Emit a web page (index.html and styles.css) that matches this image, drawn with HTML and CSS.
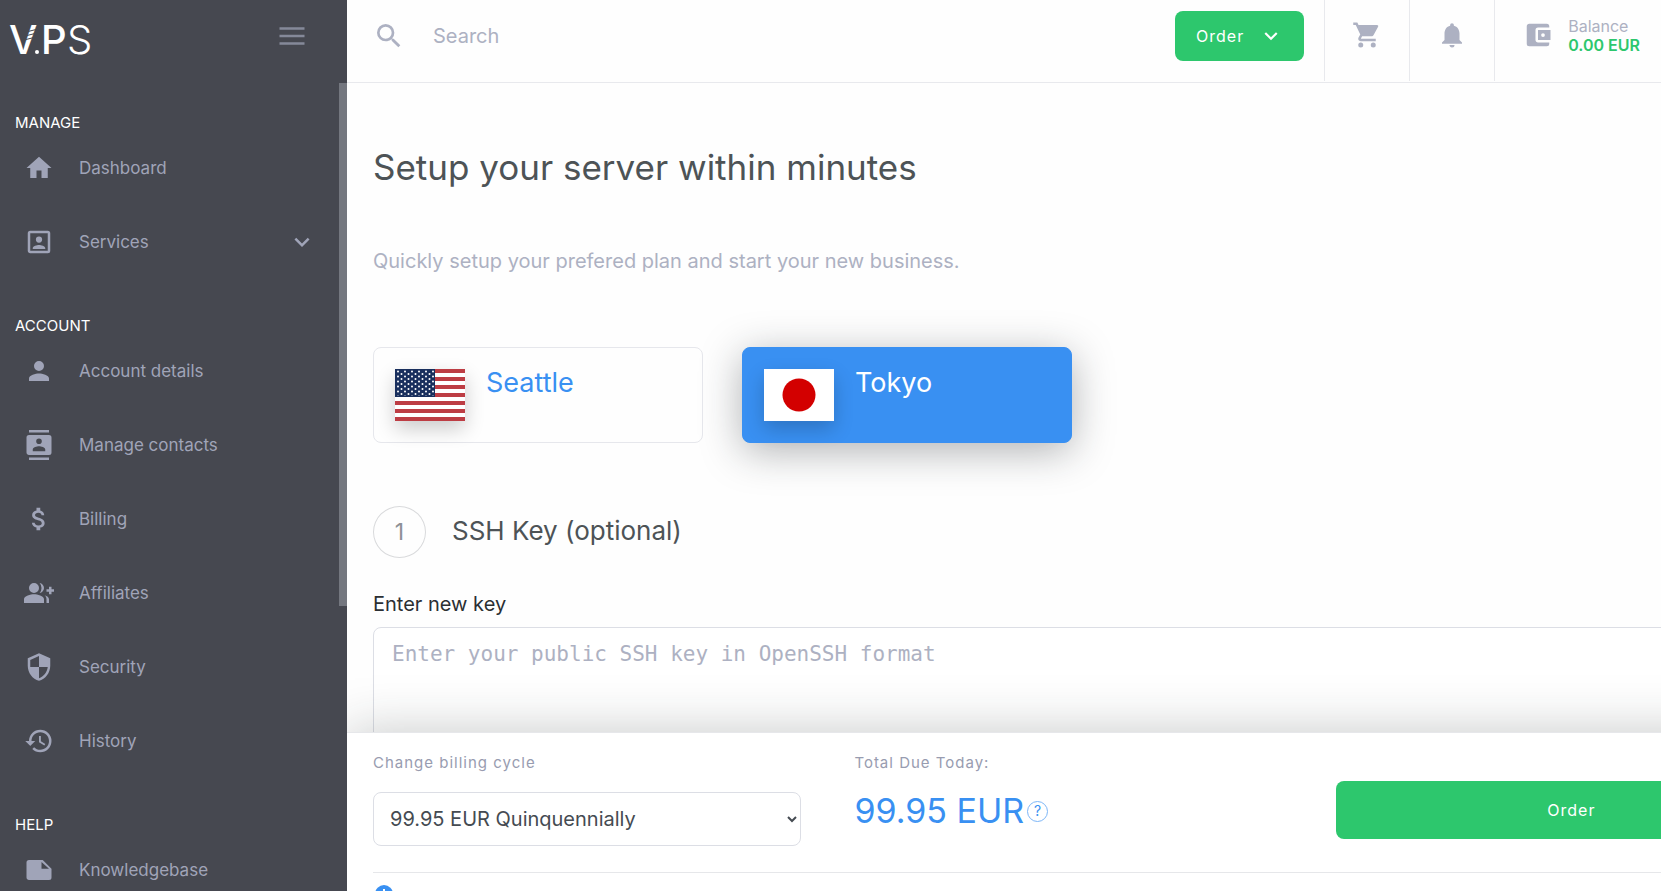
FILE: index.html
```html
<!DOCTYPE html>
<html lang="en">
<head>
  <meta charset="UTF-8">
  <meta name="viewport" content="width=device-width, initial-scale=1">
  <title>V.PS - Order</title>
  <link rel="stylesheet" href="styles.css">
</head>
<body>

  <aside class="sidebar">
    <div class="sidebar-top">
      <a href="#" class="logo" aria-label="V.PS">
        <svg width="100" height="52" viewBox="0 0 100 52">
          <text class="logo-text bold" x="9" y="41">V</text>
          <circle cx="37" cy="39" r="2" fill="#fff"/>
          <text class="logo-text bold" x="41" y="41">P</text>
          <text class="logo-text" x="67" y="41">S</text>
          <path class="logo-cut" d="M26 19l12-3M25 23l12-3M24 27l12-3"/>
        </svg>
      </a>
      <button class="menu-btn" aria-label="Toggle menu">
        <svg class="icon" viewBox="0 0 24 24"><path d="M2 5h20v2H2zM2 11h20v2H2zM2 17h20v2H2z"/></svg>
      </button>
    </div>

    <div class="sidebar-scroll">
      <nav class="nav">
        <h2 class="nav-title">MANAGE</h2>
        <a href="#" class="nav-link">
          <svg class="icon" viewBox="0 0 24 24"><path d="M10 20v-6h4v6h5v-8h3L12 3 2 12h3v8z"/></svg>
          <span>Dashboard</span>
        </a>
        <a href="#" class="nav-link">
          <svg class="icon" viewBox="0 0 24 24"><path d="M19 3H5a2 2 0 0 0-2 2v14c0 1.100.9 2 2 2h14a2 2 0 0 0 2-2V5a2 2 0 0 0-2-2zm0 16H5V5h14v14zM12 12.500a2.500 2.500 0 1 0 0-5 2.500 2.500 0 0 0 0 5zM17 17.500v-.7c0-1.600-3.300-2.500-5-2.500s-5 .9-5 2.500v.7z"/></svg>
          <span>Services</span>
          <svg class="icon chevron" viewBox="0 0 24 24"><path d="M7.400 8.600L12 13.200l4.600-4.600L18 10l-6 6-6-6z"/></svg>
        </a>

        <h2 class="nav-title">ACCOUNT</h2>
        <a href="#" class="nav-link">
          <svg class="icon" viewBox="0 0 24 24"><path d="M12 12a4 4 0 1 0 0-8 4 4 0 0 0 0 8zm0 2c-2.670 0-8 1.340-8 4v2h16v-2c0-2.660-5.330-4-8-4z"/></svg>
          <span>Account details</span>
        </a>
        <a href="#" class="nav-link">
          <svg class="icon" viewBox="0 0 24 24"><path d="M20 0H4v2h16V0zM4 24h16v-2H4v2zM20 4H4a2 2 0 0 0-2 2v12c0 1.100.9 2 2 2h16a2 2 0 0 0 2-2V6a2 2 0 0 0-2-2zm-8 2.750a2.250 2.250 0 1 1 0 4.500 2.250 2.250 0 0 1 0-4.500zM17 17H7v-1.500c0-1.670 3.330-2.500 5-2.500s5 .83 5 2.500V17z"/></svg>
          <span>Manage contacts</span>
        </a>
        <a href="#" class="nav-link">
          <svg class="icon" viewBox="0 0 24 24"><path d="M11.800 10.900c-2.270-.59-3-1.200-3-2.150 0-1.090 1.010-1.850 2.700-1.850 1.780 0 2.440.85 2.500 2.100h2.210c-.07-1.720-1.120-3.300-3.210-3.810V3h-3v2.160c-1.940.42-3.500 1.680-3.500 3.610 0 2.310 1.910 3.460 4.700 4.130 2.500.6 3 1.480 3 2.410 0 .69-.49 1.790-2.700 1.790-2.060 0-2.870-.92-2.980-2.100h-2.200c.12 2.190 1.760 3.420 3.680 3.830V21h3v-2.150c1.950-.37 3.500-1.500 3.500-3.550 0-2.840-2.430-3.810-4.700-4.400z"/></svg>
          <span>Billing</span>
        </a>
        <a href="#" class="nav-link">
          <svg class="icon" viewBox="0 0 24 24"><path d="M22 9V7h-2v2h-2v2h2v2h2v-2h2V9zM8 12a4 4 0 1 0 0-8 4 4 0 0 0 0 8zm0 1c-2.670 0-8 1.340-8 4v3h16v-3c0-2.660-5.330-4-8-4zM12.510 4.050a5.900 5.900 0 0 1 0 7.900C14.470 11.700 16 10.040 16 8s-1.530-3.700-3.490-3.950zM16.530 13.830C17.420 14.660 18 15.700 18 17v3h2v-3c0-1.450-1.590-2.510-3.470-3.170z"/></svg>
          <span>Affiliates</span>
        </a>
        <a href="#" class="nav-link">
          <svg class="icon" viewBox="0 0 24 24"><path d="M12 1L3 5v6c0 5.550 3.840 10.740 9 12 5.160-1.260 9-6.450 9-12V5l-9-4zm0 10.990h7c-.53 4.120-3.280 7.790-7 8.940V12H5V6.300l7-3.110v8.800z"/></svg>
          <span>Security</span>
        </a>
        <a href="#" class="nav-link">
          <svg class="icon" viewBox="0 0 24 24"><path d="M13 3a9 9 0 0 0-9 9H1l3.890 3.890.07.14L9 12H6c0-3.870 3.130-7 7-7s7 3.130 7 7-3.130 7-7 7c-1.930 0-3.680-.79-4.940-2.060l-1.420 1.420A8.950 8.950 0 0 0 13 21a9 9 0 0 0 0-18zm-1 5v5l4.280 2.540.72-1.210-3.500-2.080V8z"/></svg>
          <span>History</span>
        </a>

        <h2 class="nav-title">HELP</h2>
        <a href="#" class="nav-link">
          <svg class="icon" viewBox="0 0 24 24"><path d="M15 4H4a2 2 0 0 0-2 2v12.010c0 1.100.9 1.990 2 1.990h16a2 2 0 0 0 2-2v-7l-7-7zm-1 7V5.500l6 5.500z"/></svg>
          <span>Knowledgebase</span>
        </a>
      </nav>
      <div class="scrollbar"></div>
    </div>
  </aside>

  <div class="page">
    <header class="topbar">
      <form class="search">
        <svg class="icon" viewBox="0 0 24 24"><path d="M15.500 14h-.79l-.28-.27A6.470 6.470 0 0 0 16 9.500 6.500 6.500 0 1 0 9.500 16c1.610 0 3.090-.59 4.230-1.570l.27.28v.79l5 4.990L20.490 19l-4.990-5zm-6 0a4.500 4.500 0 1 1 0-9 4.500 4.500 0 0 1 0 9z"/></svg>
        <input type="text" placeholder="Search" aria-label="Search">
      </form>
      <button class="btn order-menu">
        Order
        <svg class="icon" viewBox="0 0 24 24"><path d="M7.400 8.600L12 13.200l4.600-4.600L18 10l-6 6-6-6z"/></svg>
      </button>
      <div class="topbar-items">
        <a href="#" class="topbar-item" aria-label="Cart">
          <svg class="icon" viewBox="0 0 24 24"><path d="M7 18a2 2 0 1 0 0 4 2 2 0 0 0 0-4zM1 2v2h2l3.600 7.590-1.350 2.450C4.520 15.370 5.480 17 7 17h12v-2H7.420a.25.25 0 0 1-.22-.37L8.100 13h7.450c.75 0 1.410-.41 1.750-1.030l3.580-6.490A1 1 0 0 0 20.010 4H5.210l-.94-2H1zm16 16a2 2 0 1 0 0 4 2 2 0 0 0 0-4z"/></svg>
        </a>
        <a href="#" class="topbar-item" aria-label="Notifications">
          <svg class="icon" viewBox="0 0 24 24"><path d="M12 22a2 2 0 0 0 2-2h-4c0 1.100.89 2 2 2zm6-6v-5c0-3.070-1.640-5.640-4.500-6.320V4a1.500 1.500 0 0 0-3 0v.68C7.630 5.360 6 7.920 6 11v5l-2 2v1h16v-1z"/></svg>
        </a>
        <a href="#" class="topbar-item balance">
          <svg class="icon" viewBox="0 0 24 24"><path d="M21 18v1a2 2 0 0 1-2 2H5a2 2 0 0 1-2-2V5c0-1.100.89-2 2-2h14a2 2 0 0 1 2 2v1h-9a2 2 0 0 0-2 2v8c0 1.100.89 2 2 2h9zm-9-2h10V8H12v8zm4-2.500a1.500 1.500 0 1 1 0-3 1.500 1.500 0 0 1 0 3z"/></svg>
          <span>Balance<strong>0.00 EUR</strong></span>
        </a>
      </div>
    </header>

    <main class="content">
      <h1>Setup your server within minutes</h1>
      <p class="lead">Quickly setup your prefered plan and start your new business.</p>

      <div class="locations">
        <a href="#" class="location">
          <svg class="flag" viewBox="0 0 70 52">
            <defs>
              <pattern id="stars" x="1" y="0" width="7" height="5" patternUnits="userSpaceOnUse">
                <circle cx="2" cy="2.500" r="1" fill="#fff"/>
                <circle cx="5.500" cy="5" r="1" fill="#fff"/>
                <circle cx="5.500" cy="0" r="1" fill="#fff"/>
              </pattern>
            </defs>
            <path fill="#fff" d="M0 0h70v52H0z"/>
            <path fill="#bd3d44" d="M0 0h70v4H0zM0 8h70v4H0zM0 16h70v4H0zM0 24h70v4H0zM0 32h70v4H0zM0 40h70v4H0zM0 48h70v4H0z"/>
            <path fill="#192f5d" d="M0 0h40v28H0z"/>
            <path fill="url(#stars)" d="M1 1h38v26H1z"/>
          </svg>
          <span>Seattle</span>
        </a>
        <a href="#" class="location active">
          <svg class="flag" viewBox="0 0 70 52">
            <path fill="#fff" d="M0 0h70v52H0z"/>
            <circle cx="35" cy="26" r="16.500" fill="#d30000"/>
          </svg>
          <span>Tokyo</span>
        </a>
      </div>

      <div class="step">
        <span class="step-number">1</span>
        <h2>SSH Key (optional)</h2>
      </div>
      <label class="key-label" for="ssh-key">Enter new key</label>
      <textarea id="ssh-key" class="key-input" placeholder="Enter your public SSH key in OpenSSH format"></textarea>
    </main>

    <section class="summary">
      <div class="summary-row">
        <div>
          <label class="summary-label" for="cycle">Change billing cycle</label>
          <select id="cycle" class="cycle">
            <option>99.95 EUR Quinquennially</option>
          </select>
        </div>
        <div>
          <span class="summary-label">Total Due Today:</span>
          <div class="price">
            99.95 EUR
            <button class="help" aria-label="Price details">?</button>
          </div>
        </div>
        <button class="btn order-btn">Order</button>
      </div>
      <div class="summary-note">
        <svg class="info" viewBox="0 0 20 20"><circle cx="10" cy="10" r="9"/><path d="M9 5h2v2H9zM9 9h2v6H9z"/></svg>
      </div>
    </section>
  </div>

</body>
</html>
```

FILE: styles.css
```css
* {
  box-sizing: border-box;
}

body {
  margin: 0;
  height: 100vh;
  display: flex;
  overflow: hidden;
  font-family: Inter, "Liberation Sans", sans-serif;
  background: #fefefe;
  color: #4d5356;
}

a {
  text-decoration: none;
}

button {
  font-family: inherit;
  border: 0;
  padding: 0;
  cursor: pointer;
}

h1, h2 {
  font-weight: 400;
  margin: 0;
}

.icon {
  width: 30px;
  height: 30px;
  fill: currentColor;
  flex: none;
}

/* sidebar */
.sidebar {
  width: 347px;
  flex: none;
  display: flex;
  flex-direction: column;
  background: #464850;
  color: #a0a4b8;
}

.sidebar-top {
  height: 83px;
  flex: none;
  display: flex;
  align-items: flex-start;
  justify-content: space-between;
  padding: 13px 40px 0 0;
}

.logo-text {
  font-size: 40px;
  font-weight: 300;
  fill: #fff;
}

.logo-text.bold {
  font-weight: 500;
}

.logo-cut {
  stroke: #464850;
  stroke-width: 1;
}

.menu-btn {
  margin-top: 8px;
  background: none;
  color: #858999;
}

.sidebar-scroll {
  flex: 1;
  min-height: 0;
  display: flex;
  align-items: flex-start;
}

.nav {
  flex: 1;
  display: flex;
  flex-direction: column;
}

.nav-title {
  padding: 39px 15px 0;
  font-size: 15px;
  line-height: 16px;
  color: #fff;
}

.nav-title:first-child {
  padding-top: 32px;
}

.nav-link {
  height: 74px;
  display: flex;
  align-items: center;
  gap: 25px;
  padding: 0 22px 0 24px;
  font-size: 17px;
  color: inherit;
}

.nav-link .chevron {
  margin-left: auto;
}

.scrollbar {
  width: 8px;
  height: 523px;
  background: #74777f;
}

/* top bar */
.page {
  flex: 1;
  min-width: 0;
  display: flex;
  flex-direction: column;
  overflow: hidden;
}

.topbar {
  height: 83px;
  flex: none;
  display: flex;
  align-items: flex-start;
  border-bottom: 1px solid #e8e9ed;
  color: #adb1c2;
}

.search {
  flex: 1;
  display: flex;
  align-items: center;
  gap: 28px;
  height: 72px;
  padding-left: 26px;
}

.search .icon {
  width: 32px;
  height: 32px;
}

.search input {
  flex: 1;
  border: 0;
  padding: 0;
  outline: 0;
  background: none;
  font-family: inherit;
  font-size: 20px;
}

.search input::placeholder {
  color: #adb1c2;
}

.btn {
  border-radius: 8px;
  background: #2dc76d;
  color: #fff;
  font-size: 16px;
  letter-spacing: 1px;
}

.order-menu {
  height: 50px;
  margin: 11px 20px 0 0;
  padding: 0 20px 0 21px;
  display: flex;
  align-items: center;
  gap: 14px;
}

.order-menu .icon {
  width: 26px;
  height: 26px;
}

.topbar-items {
  display: flex;
}

.topbar-item {
  width: 85px;
  height: 81px;
  display: flex;
  justify-content: center;
  padding: 20px 0 0;
  border-left: 1px solid #e8e9ed;
  color: inherit;
}

.topbar-item.balance {
  width: auto;
  padding: 17px 21px 0 28px;
  gap: 15px;
  font-size: 16px;
  line-height: 19px;
}

.balance .icon {
  margin-top: 3px;
}

.balance strong {
  display: block;
  font-weight: 600;
  color: #2dc76d;
}

/* content */
.content {
  flex: 1;
  min-height: 0;
  width: 109%;
  padding: 60px 0 0 26px;
  overflow: hidden;
}

h1 {
  font-size: 35px;
  line-height: 48px;
}

.lead {
  margin: 56px 0 0;
  font-size: 20px;
  line-height: 28px;
  color: #adb1c2;
}

.locations {
  display: flex;
  gap: 39px;
  margin-top: 72px;
}

.location {
  width: 330px;
  height: 96px;
  display: flex;
  gap: 21px;
  padding: 21px;
  border: 1px solid #e6e7ec;
  border-radius: 8px;
  font-size: 27px;
  line-height: 28px;
  color: #3990f2;
}

.location.active {
  background: #3990f2;
  border-color: #3990f2;
  color: #fff;
  box-shadow: 0 8px 40px rgba(30, 34, 40, .35);
}

.flag {
  width: 70px;
  height: 52px;
  box-shadow: 0 8px 20px rgba(0, 0, 0, .2);
}

.step {
  display: flex;
  gap: 26px;
  margin-top: 63px;
}

.step-number {
  width: 53px;
  height: 52px;
  display: flex;
  align-items: center;
  justify-content: center;
  border: 1px solid #d9dadc;
  border-radius: 50%;
  font-size: 23px;
  color: #8d9096;
}

.step h2 {
  font-size: 26px;
  line-height: 50px;
}

.key-label {
  display: block;
  margin-top: 32px;
  font-size: 20px;
  line-height: 28px;
  color: #2b2f33;
}

.key-input {
  display: block;
  width: 100%;
  height: 160px;
  margin-top: 9px;
  padding: 12px 18px;
  border: 1px solid #dcdee5;
  border-radius: 8px;
  outline: 0;
  resize: none;
  background: #fff;
  font-family: "DejaVu Sans Mono", monospace;
  font-size: 21px;
  line-height: 28px;
}

.key-input::placeholder {
  color: #adb1c2;
}

/* order summary */
.summary {
  flex: none;
  width: calc(100% + 146px);
  height: 159px;
  padding-left: 26px;
  border-top: 1px solid #e6e7ea;
  background: #fff;
  box-shadow: 0 0 50px rgba(30, 40, 40, .25);
}

.summary-row {
  display: grid;
  grid-template-columns: 10fr 10fr 11fr;
  gap: 53px;
  height: 140px;
  padding-top: 20px;
  border-bottom: 1px solid #e6e7ea;
}

.summary-label {
  display: block;
  font-size: 15px;
  line-height: 20px;
  letter-spacing: 1px;
  color: #989cb0;
}

.cycle {
  width: 100%;
  height: 54px;
  margin-top: 19px;
  padding: 0 6px 0 12px;
  border: 1px solid #dcdee5;
  border-radius: 8px;
  background: #fff;
  font-family: inherit;
  font-size: 20px;
  color: #454b52;
}

.price {
  display: flex;
  align-items: center;
  gap: 3px;
  margin-top: 16px;
  font-size: 34px;
  line-height: 44px;
  color: #3990f2;
}

.help {
  width: 21px;
  height: 21px;
  border: 1px solid #7db6f7;
  border-radius: 50%;
  background: none;
  font-size: 14px;
  line-height: 18px;
  color: #3990f2;
}

.order-btn {
  height: 58px;
  margin-top: 28px;
}

.summary-note {
  padding: 11px 0 0 1px;
}

.info {
  width: 20px;
  height: 20px;
  fill: #3990f2;
}

.info path {
  fill: #fff;
}
```
